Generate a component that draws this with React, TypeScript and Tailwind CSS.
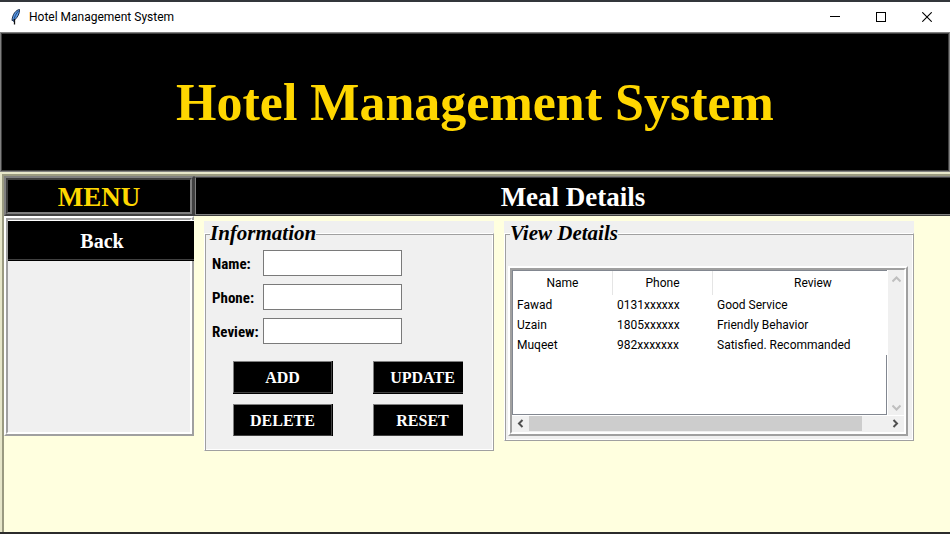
import type { ReactNode } from "react";

const ui = "font-['Roboto','Open_Sans',sans-serif] text-[12px]";
const serif = "font-['Liberation_Serif','Times_New_Roman',serif]";

type Guest = { name: string; phone: string; review: string };

const guests: Guest[] = [
  { name: "Fawad", phone: "0131xxxxxx", review: "Good Service" },
  { name: "Uzain", phone: "1805xxxxxx", review: "Friendly Behavior" },
  { name: "Muqeet", phone: "982xxxxxxx", review: "Satisfied. Recommanded" },
];

function TitleBar() {
  return (
    <header className={`${ui} flex h-[30px] items-center bg-white pl-2 text-black`}>
      <svg width="14" height="18" viewBox="0 0 14 18" aria-hidden="true">
        <path d="M11.5 1.5C8 2 4.500 6 4 12.500L6.500 12C9.500 9.500 11.800 5.500 11.500 1.500Z" fill="#5b9be6" stroke="#1e2f4a" strokeWidth="1" />
        <path d="M10.500 3C8 5.500 6.200 9 5.600 14" fill="none" stroke="#1b3f7a" strokeWidth="0.900" />
        <path d="M6.500 11V16.500" stroke="#111" strokeWidth="1.300" />
      </svg>
      <span className="ml-[7px] flex-1">Hotel Management System</span>
      <button aria-label="Minimize" className="flex h-full w-[46px] items-center justify-center">
        <svg width="10" height="10" shapeRendering="crispEdges"><path d="M0 4.500H10" stroke="#000" /></svg>
      </button>
      <button aria-label="Maximize" className="flex h-full w-[46px] items-center justify-center">
        <svg width="10" height="10" shapeRendering="crispEdges"><rect x="0.500" y="0.500" width="9" height="9" fill="none" stroke="#000" /></svg>
      </button>
      <button aria-label="Close" className="flex h-full w-[46px] items-center justify-center">
        <svg width="10" height="10"><path d="M0.300 0.300L9.700 9.700M9.700 0.300L0.300 9.700" stroke="#000" strokeWidth="1.100" /></svg>
      </button>
    </header>
  );
}

function Group({ title, children, className }: { title: string; children: ReactNode; className: string }) {
  return (
    <section className={`bg-[#f0f0f0] ${className}`}>
      <fieldset className="h-full min-w-0 border border-b-[#a0a0a0] border-l-white border-r-[#a0a0a0] border-t-white shadow-[inset_1px_1px_#a0a0a0,inset_-1px_-1px_#fff]">
        <legend className={`${serif} ml-[5px] bg-[#f0f0f0] text-[21px] leading-[24px] font-bold italic text-black`}>{title}</legend>
        {children}
      </fieldset>
    </section>
  );
}

function Field({ id, label }: { id: string; label: string }) {
  return (
    <div className="flex h-[26px] items-center">
      <label htmlFor={id} className="w-[51px] pt-0.5 font-['Liberation_Sans_Narrow','Roboto_Condensed','Roboto',sans-serif] text-[15px] leading-5 font-bold whitespace-nowrap text-black">
        {label}
      </label>
      <input id={id} type="text" className="h-[26px] w-[139px] border border-[#7a7a7a] bg-white px-1 text-sm outline-none" />
    </div>
  );
}

function ActionButton({ children }: { children: string }) {
  return (
    <button className="h-[33px] w-[100px] border-r border-b border-black">
      <span className={`${serif} flex h-full items-center justify-center border border-b-[#404040] border-l-[#808080] border-r-[#404040] border-t-[#808080] bg-black pt-0.5 text-[16px] font-bold text-white`}>
        {children}
      </span>
    </button>
  );
}

function Arrow({ label, d, color, className }: { label: string; d: string; color: string; className: string }) {
  return (
    <button aria-label={label} className={`flex items-center justify-center ${className}`}>
      <svg width="9" height="9" viewBox="0 0 9 9" fill="none" stroke={color} strokeWidth="2">
        <path d={d} />
      </svg>
    </button>
  );
}

function GuestTable() {
  return (
    <div className="border-2 border-b-[#a0a0a0] border-l-white border-r-[#a0a0a0] border-t-white">
      <div className="border-2 border-b-white border-l-[#a0a0a0] border-r-white border-t-[#a0a0a0] bg-white">
        <div className="flex h-[145px]">
          <div className="flex min-w-0 flex-1 flex-col overflow-hidden border-b border-l border-t border-[#828790] bg-white">
            <table className={`${ui} w-[400px] table-fixed border-separate border-spacing-0 text-black`}>
              <thead>
                <tr className="h-6">
                  <th className="w-[100px] border-r border-[#e5e5e5] p-0 font-normal">Name</th>
                  <th className="w-[100px] border-r border-[#e5e5e5] p-0 font-normal">Phone</th>
                  <th className="p-0 font-normal">Review</th>
                </tr>
              </thead>
              <tbody>
                {guests.map((g) => (
                  <tr key={g.name} className="h-5">
                    <td className="py-0 pl-1 leading-5">{g.name}</td>
                    <td className="py-0 pl-1 leading-5">{g.phone}</td>
                    <td className="py-0 pl-1 leading-5">{g.review}</td>
                  </tr>
                ))}
              </tbody>
            </table>
            <div className="flex-1 border-r border-[#828790]" />
          </div>
          <div className="ml-px flex w-4 flex-col justify-between bg-[#f0f0f0]">
            <Arrow label="Scroll up" d="M0.500 6.500L4.500 2.500L8.500 6.500" color="#bfbfbf" className="h-[18px] w-4" />
            <Arrow label="Scroll down" d="M0.500 2.500L4.500 6.500L8.500 2.500" color="#bfbfbf" className="h-4 w-4" />
          </div>
        </div>
        <div className="mt-px flex h-4 bg-[#f0f0f0]">
          <Arrow label="Scroll left" d="M6.500 1L3 4.500L6.500 8" color="#505050" className="h-[15px] w-[17px]" />
          <div className="flex-1">
            <div className="h-[15px] w-[93%] bg-[#cdcdcd]" />
          </div>
          <Arrow label="Scroll right" d="M2.500 1L6 4.500L2.500 8" color="#505050" className="h-[15px] w-[17px]" />
        </div>
      </div>
    </div>
  );
}

export default function App() {
  return (
    <div className="flex min-h-screen flex-col border-b-2 border-t-2 border-b-[#2b2b2b] border-t-[#33363b] bg-[#ffffdf]">
      <TitleBar />
      <div className="border border-[#808080]">
        <h1 className={`${serif} flex h-[138px] items-center justify-center border border-[#404040] bg-black pt-0.5 text-[52px] font-bold text-[#ffd700]`}>
          Hotel Management System
        </h1>
      </div>
      <div className="flex flex-1 border-l-2 border-t-2 border-[#e6e6c9]">
        <main className="flex min-w-0 flex-1 border-l-2 border-t-2 border-[#9a9a80]">
          <aside className="w-[190px] shrink-0">
            <div className="border-2 border-b-[#404040] border-l-[#808080] border-r-[#404040] border-t-[#808080]">
              <h2 className={`${serif} flex h-9 items-center justify-center border-2 border-b-[#808080] border-l-[#404040] border-r-[#808080] border-t-[#404040] bg-black pt-0.5 text-[27px] font-bold text-[#ffd700]`}>
                MENU
              </h2>
            </div>
            <nav className="border-2 border-b-[#a0a0a0] border-l-white border-r-[#a0a0a0] border-t-white">
              <div className="h-[216px] border-2 border-b-white border-l-[#a0a0a0] border-r-white border-t-[#a0a0a0] bg-[#f0f0f0]">
                <button className={`${serif} -mr-1 flex h-[41px] w-[186px] items-center justify-center border-b border-t border-b-black border-t-white bg-black text-[20px] font-bold text-white`}>
                  <span className="flex h-full w-full items-center justify-center border-b border-[#404040] pl-0.5 pt-0.5">Back</span>
                </button>
              </div>
            </nav>
          </aside>
          <div className="min-w-0 flex-1">
            <div className="border-b border-l border-t border-b-[#404040] border-l-[#404040] border-t-[#808080]">
              <h2 className={`${serif} flex h-[38px] items-center justify-center border-b border-l border-t border-b-[#808080] border-l-[#808080] border-t-[#404040] bg-black pt-0.5 text-[27px] font-bold text-white`}>
                Meal Details
              </h2>
            </div>
            <div className="flex items-start gap-[10px] pl-[10px] pt-[5px]">
              <Group title="Information" className="h-[230px] w-[290px] shrink-0">
                <div className="flex flex-col gap-2 pl-[7px] pt-[5px]">
                  <Field id="name" label="Name:" />
                  <Field id="phone" label="Phone:" />
                  <Field id="review" label="Review:" />
                </div>
                <div className="ml-7 mt-[17px] grid h-[75px] w-[230px] grid-cols-[100px_100px] content-start gap-x-10 gap-y-[10px] overflow-hidden">
                  <ActionButton>ADD</ActionButton>
                  <ActionButton>UPDATE</ActionButton>
                  <ActionButton>DELETE</ActionButton>
                  <ActionButton>RESET</ActionButton>
                </div>
              </Group>
              <Group title="View Details" className="h-[220px] w-[410px] shrink-0">
                <div className="pl-[3px] pr-[5px] pt-[21px]">
                  <GuestTable />
                </div>
              </Group>
            </div>
          </div>
        </main>
      </div>
    </div>
  );
}
